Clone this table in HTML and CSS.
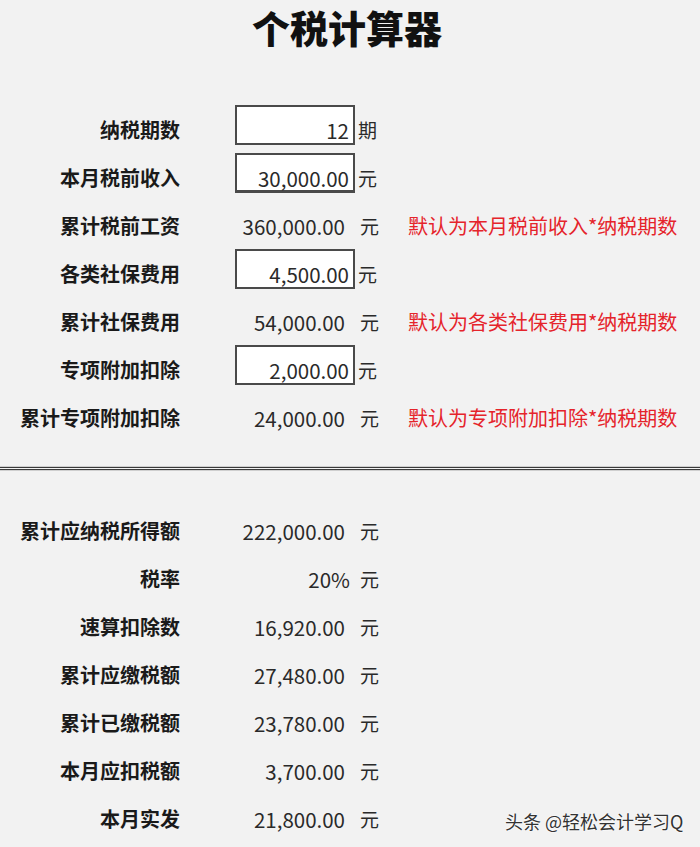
FILE: index.html
```html
<!DOCTYPE html>
<html lang="zh">
<head>
<meta charset="utf-8">
<title>个税计算器</title>
<link rel="stylesheet" href="styles.css">
</head>
<body>
<div class="page">
  <h1 class="title">个税计算器</h1>

  <div class="sheet sheet-top">
    <div class="label">纳税期数</div>
    <div class="value input">12</div>
    <div class="unit">期</div>
    <div class="note"></div>

    <div class="label">本月税前收入</div>
    <div class="value input active">30,000.00</div>
    <div class="unit">元</div>
    <div class="note"></div>

    <div class="label">累计税前工资</div>
    <div class="value acct">360,000.00</div>
    <div class="unit acct-unit">元</div>
    <div class="note">默认为本月税前收入*纳税期数</div>

    <div class="label">各类社保费用</div>
    <div class="value input">4,500.00</div>
    <div class="unit">元</div>
    <div class="note"></div>

    <div class="label">累计社保费用</div>
    <div class="value acct">54,000.00</div>
    <div class="unit acct-unit">元</div>
    <div class="note">默认为各类社保费用*纳税期数</div>

    <div class="label">专项附加扣除</div>
    <div class="value input">2,000.00</div>
    <div class="unit">元</div>
    <div class="note"></div>

    <div class="label">累计专项附加扣除</div>
    <div class="value acct">24,000.00</div>
    <div class="unit acct-unit">元</div>
    <div class="note">默认为专项附加扣除*纳税期数</div>
  </div>

  <div class="divider"></div>

  <div class="sheet sheet-bottom">
    <div class="label">累计应纳税所得额</div>
    <div class="value acct">222,000.00</div>
    <div class="unit acct-unit">元</div>
    <div class="note"></div>

    <div class="label">税率</div>
    <div class="value pct">20%</div>
    <div class="unit acct-unit">元</div>
    <div class="note"></div>

    <div class="label">速算扣除数</div>
    <div class="value acct">16,920.00</div>
    <div class="unit acct-unit">元</div>
    <div class="note"></div>

    <div class="label">累计应缴税额</div>
    <div class="value acct">27,480.00</div>
    <div class="unit acct-unit">元</div>
    <div class="note"></div>

    <div class="label">累计已缴税额</div>
    <div class="value acct">23,780.00</div>
    <div class="unit acct-unit">元</div>
    <div class="note"></div>

    <div class="label">本月应扣税额</div>
    <div class="value acct">3,700.00</div>
    <div class="unit acct-unit">元</div>
    <div class="note"></div>

    <div class="label">本月实发</div>
    <div class="value acct">21,800.00</div>
    <div class="unit acct-unit">元</div>
    <div class="note"></div>
  </div>

  <div class="watermark">头条 @轻松会计学习Q</div>
</div>
</body>
</html>
```

FILE: styles.css
```css
html, body {
  margin: 0;
  padding: 0;
  background: #f2f2f2;
}

body {
  font-family: "Noto Sans CJK SC", "Noto Sans", "Liberation Sans", sans-serif;
  color: #222;
}

.page {
  position: relative;
  width: 700px;
  height: 847px;
  overflow: hidden;
}

.title {
  margin: 0;
  padding: 2px 6px 0 0;
  text-align: center;
  font-size: 38px;
  line-height: 50px;
  font-weight: 900;
  color: #111;
}

.sheet {
  display: grid;
  grid-template-columns: 235px 120px 53px auto;
  grid-auto-rows: 48px;
  align-items: start;
}

.sheet-top {
  margin-top: 53px;
}

.sheet-bottom {
  margin-top: 36px;
}

.label,
.value,
.unit,
.note {
  box-sizing: border-box;
  height: 40px;
  padding-top: 11px;
  line-height: 28px;
  white-space: nowrap;
}

.label {
  text-align: right;
  padding-right: 55px;
  font-size: 20px;
  font-weight: 700;
  color: #1a1a1a;
}

.value {
  text-align: right;
  font-size: 20.5px;
  color: #2a2a2a;
}

.value.input {
  background: #fff;
  border: 2px solid #4a4a4a;
  padding-top: 9px;
  padding-right: 4px;
}

.value.input.active {
  border-bottom-width: 3px;
}

.value.acct {
  padding-right: 10px;
}

.value.pct {
  padding-right: 5px;
}

.unit {
  padding-left: 3px;
  font-size: 19px;
  color: #2a2a2a;
}

.unit.acct-unit {
  padding-left: 5px;
}

.note {
  font-size: 20px;
  color: #e5242b;
}

.divider {
  margin-top: 26px;
  height: 0;
  border-top: 3px double #3a3a3a;
  box-shadow: 0 -1px 0 #cfcfcf, 0 1px 0 #cfcfcf;
}

.watermark {
  position: absolute;
  left: 505px;
  top: 808px;
  font-size: 18px;
  line-height: 26px;
  color: #333;
  text-shadow: 0 0 2px #fff, 0 0 2px #fff;
}
```
